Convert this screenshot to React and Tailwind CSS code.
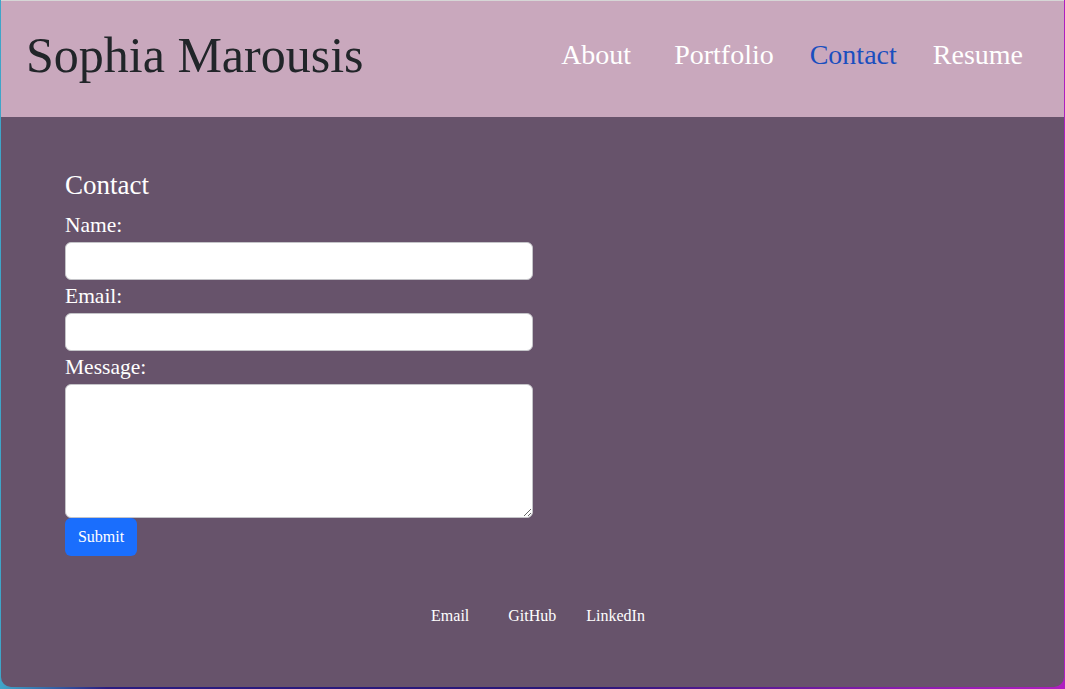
import React from 'react';

const serif = { fontFamily: '"Liberation Serif", "Times New Roman", serif' };

const App = () => {
  return (
    <div
      className="h-[689px] w-full px-px pb-[2px] bg-[linear-gradient(90deg,#3fa6c9_0%,#2b1c80_10%,#2a1678_55%,#8a1cb0_85%,#b01ec0_100%)]"
      style={serif}
    >
      <div className="h-full flex flex-col rounded-b-[10px] overflow-hidden border-t border-[#d6d6d6]">
        {/* Header */}
        <header className="h-[116px] shrink-0 bg-[#c9a8bd] flex items-center justify-between pl-[25px] pr-[41px] pb-[8px]">
          <h1 className="text-[50px] leading-none text-[#212529]">Sophia Marousis</h1>
          <nav className="flex items-center text-[28px] leading-none text-white">
            <a className="mr-[43px]">About</a>
            <a className="mr-[36px]">Portfolio</a>
            <a className="mr-[36px] text-[#1a4fbf]">Contact</a>
            <a>Resume</a>
          </nav>
        </header>

        {/* Main */}
        <main className="flex-1 bg-[#67536b] pt-[52px] px-[64px] text-white">
          <h2 className="text-[27px] leading-[32px] mb-[8px]">Contact</h2>
          <form className="w-[468px] flex flex-col" onSubmit={(e) => e.preventDefault()}>
            <label className="text-[21.5px] leading-[33px]">Name:</label>
            <input
              type="text"
              className="h-[38px] w-full bg-white rounded-[6px] border border-[#c4c4c8] px-3 text-black"
            />
            <label className="text-[21.5px] leading-[33px]">Email:</label>
            <input
              type="email"
              className="h-[38px] w-full bg-white rounded-[6px] border border-[#c4c4c8] px-3 text-black"
            />
            <label className="text-[21.5px] leading-[33px]">Message:</label>
            <textarea className="h-[134px] w-full bg-white rounded-[6px] border border-[#c4c4c8] px-3 py-2 text-black block" />
            <div>
              <button
                type="submit"
                className="w-[72px] h-[38px] bg-[#1a6efd] text-white text-[16px] rounded-[6px]"
              >
                Submit
              </button>
            </div>
          </form>

          {/* Footer */}
          <footer className="mt-[48px] flex justify-center text-[16px] leading-[24px] text-white pl-[11px]">
            <a className="mr-[39px]">Email</a>
            <a className="mr-[30px]">GitHub</a>
            <a>LinkedIn</a>
          </footer>
        </main>
      </div>
    </div>
  );
};

export default App;
